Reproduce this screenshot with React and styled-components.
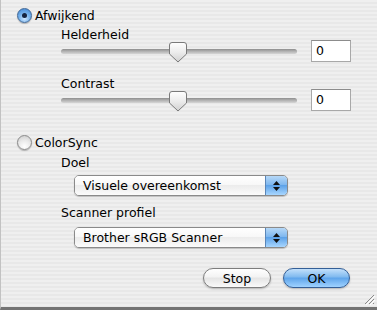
import React from 'react';
import styled, { createGlobalStyle } from 'styled-components';

const GlobalStyle = createGlobalStyle`
  html, body {
    margin: 0;
    padding: 0;
  }
  body {
    font-family: "DejaVu Sans", "Liberation Sans", sans-serif;
    font-size: 12.5px;
    color: #000;
  }
`;

const Window = styled.div`
  position: relative;
  width: 377px;
  height: 310px;
  box-sizing: border-box;
  border-left: 1px solid #c2c2c2;
  border-bottom: 3px solid #747474;
  background: repeating-linear-gradient(to bottom, #efefef 0 2px, #e8e8e8 2px 4px);
  display: flex;
  flex-direction: column;
  padding: 7px 0 0 16px;
`;

const RadioRow = styled.label`
  display: flex;
  align-items: center;
  gap: 3px;
  height: 16px;
  margin-top: ${(p) => p.$top || 0}px;
`;

const RadioDot = styled.span`
  width: 13px;
  height: 13px;
  border-radius: 50%;
  display: flex;
  align-items: center;
  justify-content: center;
  border: 1px solid ${(p) => (p.$on ? '#3f6796' : '#8a8a8a')};
  background: ${(p) =>
    p.$on
      ? 'radial-gradient(circle at 50% 75%, #cde6ff 0, #78b3ec 45%, #3b82d2 100%)'
      : 'radial-gradient(circle at 50% 80%, #ffffff 0, #e9e9e9 50%, #c9c9c9 100%)'};
  box-shadow: 0 1px 1px rgba(0, 0, 0, 0.25);

  &::after {
    content: '';
    display: ${(p) => (p.$on ? 'block' : 'none')};
    width: 5px;
    height: 5px;
    border-radius: 50%;
    background: #15233f;
  }
`;

const Group = styled.div`
  display: flex;
  flex-direction: column;
  padding-left: 44px;
`;

const Label = styled.div`
  line-height: 15px;
  height: 15px;
  margin-top: ${(p) => p.$top || 0}px;
`;

const SliderRow = styled.div`
  display: flex;
  align-items: center;
  height: 22px;
  margin-top: -2px;
`;

const Track = styled.div`
  position: relative;
  width: 236px;
  height: 5px;
  border-radius: 3px;
  background: linear-gradient(#8e8e8e, #b4b4b4 50%, #d6d6d6);
`;

const Thumb = styled.svg`
  position: absolute;
  top: -7px;
  left: ${(p) => p.$pos}px;
`;

const NumberField = styled.div`
  margin-left: 14px;
  width: 34px;
  height: 20px;
  background: #fff;
  border: 1px solid #a8a8a8;
  border-top-color: #8c8c8c;
  line-height: 20px;
  padding-left: 4px;
  box-sizing: content-box;
`;

const Popup = styled.div`
  display: flex;
  width: 212px;
  height: 19px;
  margin: ${(p) => p.$top || 0}px 0 0 13px;
  border: 1px solid #8a8a8a;
  border-radius: 5px;
  overflow: hidden;
  box-shadow: 0 1px 1px rgba(0, 0, 0, 0.2);
`;

const PopupText = styled.div`
  flex: 1;
  padding-left: 8px;
  line-height: 19px;
  background: linear-gradient(#ffffff, #f7f7f7 50%, #ececec 50%, #fbfbfb);
`;

const PopupArrows = styled.div`
  width: 21px;
  display: flex;
  flex-direction: column;
  align-items: center;
  justify-content: center;
  gap: 2px;
  border-left: 1px solid #5a86b8;
  background: linear-gradient(#b6d8f7, #79b4ee 50%, #5da2e8 50%, #a8d6ff);
`;

const ButtonRow = styled.div`
  display: flex;
  justify-content: flex-end;
  gap: 12px;
  padding-right: 27px;
  margin-top: 20px;
`;

const AquaButton = styled.button`
  width: ${(p) => p.$w}px;
  height: 20px;
  border-radius: 10px;
  font-family: inherit;
  font-size: 12.5px;
  color: #000;
  padding: 0;
  border: 1px solid ${(p) => (p.$primary ? '#345f97' : '#7d7d7d')};
  background: ${(p) =>
    p.$primary
      ? 'linear-gradient(#c3e0fb, #7fb9ef 45%, #5ea4ea 50%, #9fd2ff)'
      : 'linear-gradient(#ffffff, #f3f3f3 45%, #e4e4e4 50%, #fafafa)'};
  box-shadow: 0 1px 2px rgba(0, 0, 0, 0.25);
`;

const Grip = styled.svg`
  position: absolute;
  right: 2px;
  bottom: 2px;
`;

const Slider = ({ pos }) => (
  <Track>
    <Thumb $pos={pos} width="18" height="21" viewBox="0 0 18 21">
      <defs>
        <linearGradient id="thumbFill" x1="0" y1="0" x2="0" y2="1">
          <stop offset="0" stopColor="#ffffff" />
          <stop offset="0.5" stopColor="#ececec" />
          <stop offset="1" stopColor="#d0d0d0" />
        </linearGradient>
      </defs>
      <path
        d="M3 0.5 H15 Q17.5 0.5 17.5 3 V12 L9 20 L0.5 12 V3 Q0.5 0.5 3 0.5 Z"
        fill="url(#thumbFill)"
        stroke="#7a7a7a"
      />
    </Thumb>
  </Track>
);

const Select = ({ value, top }) => (
  <Popup $top={top}>
    <PopupText>{value}</PopupText>
    <PopupArrows>
      <svg width="7" height="4" viewBox="0 0 7 4"><path d="M3.5 0 L7 4 H0 Z" fill="#111" /></svg>
      <svg width="7" height="4" viewBox="0 0 7 4"><path d="M0 0 H7 L3.5 4 Z" fill="#111" /></svg>
    </PopupArrows>
  </Popup>
);

export default function App() {
  return (
    <>
      <GlobalStyle />
      <Window>
        <RadioRow>
          <RadioDot $on />
          Afwijkend
        </RadioRow>
        <Group>
          <Label $top={4}>Helderheid</Label>
          <SliderRow>
            <Slider pos={108} />
            <NumberField>0</NumberField>
          </SliderRow>
          <Label $top={14}>Contrast</Label>
          <SliderRow>
            <Slider pos={108} />
            <NumberField>0</NumberField>
          </SliderRow>
        </Group>
        <RadioRow $top={23}>
          <RadioDot />
          ColorSync
        </RadioRow>
        <Group>
          <Label $top={5}>Doel</Label>
          <Select value="Visuele overeenkomst" top={5} />
          <Label $top={9}>Scanner profiel</Label>
          <Select value="Brother sRGB Scanner" top={7} />
        </Group>
        <ButtonRow>
          <AquaButton $w={68}>Stop</AquaButton>
          <AquaButton $w={67} $primary>OK</AquaButton>
        </ButtonRow>
        <Grip width="12" height="12" viewBox="0 0 12 12">
          <path d="M11 2 L2 11 M11 6 L6 11 M11 10 L10 11" stroke="#8a8a8a" strokeWidth="1" />
          <path d="M12 3 L3 12 M12 7 L7 12" stroke="#ffffff" strokeWidth="1" />
        </Grip>
      </Window>
    </>
  );
}
